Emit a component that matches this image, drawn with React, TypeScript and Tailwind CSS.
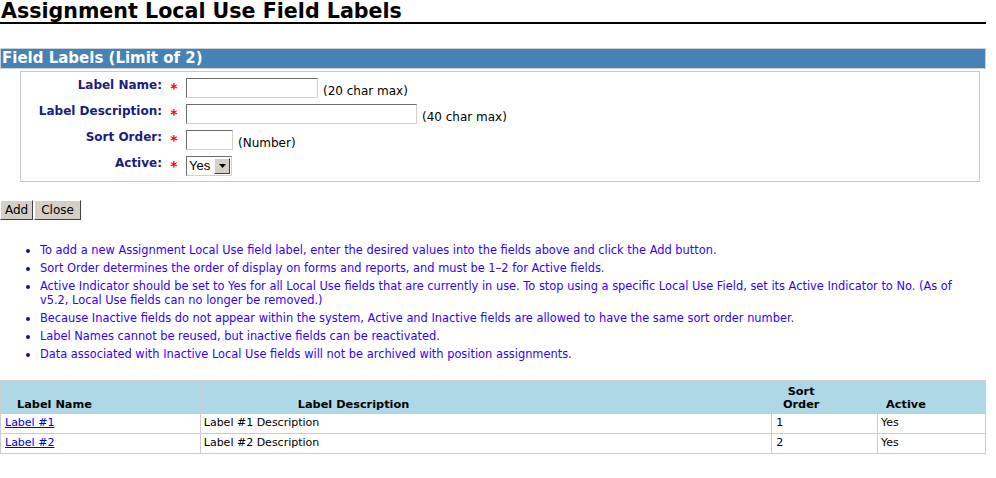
import React from 'react'

const notes: string[] = [
  'To add a new Assignment Local Use field label, enter the desired values into the fields above and click the Add button.',
  'Sort Order determines the order of display on forms and reports, and must be 1\u20132 for Active fields.',
  'Active Indicator should be set to Yes for all Local Use fields that are currently in use. To stop using a specific Local Use Field, set its Active Indicator to No. (As of v5.2, Local Use fields can no longer be removed.)',
  'Because Inactive fields do not appear within the system, Active and Inactive fields are allowed to have the same sort order number.',
  'Label Names cannot be reused, but inactive fields can be reactivated.',
  'Data associated with Inactive Local Use fields will not be archived with position assignments.',
]

const rows = [
  { name: 'Label #1', desc: 'Label #1 Description', sort: '1', active: 'Yes' },
  { name: 'Label #2', desc: 'Label #2 Description', sort: '2', active: 'Yes' },
]

const inputCls =
  'h-[20px] bg-white border border-t-[#6b6b6b] border-l-[#6b6b6b] border-r-[#d4d0c8] border-b-[#d4d0c8] outline-none'

const FieldRow: React.FC<{ label: string; hint?: string; children: React.ReactNode }> = ({ label, hint, children }) => (
  <div className="flex items-start h-[26px]">
    <div className="w-[141px] text-right font-bold text-[12px] text-[#1c1c80] pt-[1px]">{label}</div>
    <div className="w-[24px] text-center text-[#ff0000] text-[14px] font-bold pt-[6px] leading-[14px]">*</div>
    {children}
    {hint && <span className="text-[12px] text-black ml-[5px] pt-[9px] leading-[14px]">{hint}</span>}
  </div>
)

export default function App() {
  return (
    <div className="w-[996px] h-[478px] bg-white font-['DejaVu_Sans',Verdana,sans-serif] text-[11px] overflow-hidden">
      <div className="w-[986px]">
        <h1 className="text-[20.6px] font-bold text-black leading-[22px] pl-[1px] border-b-2 border-black">
          Assignment Local Use Field Labels
        </h1>

        <div className="mt-[24px] h-[21px] bg-[#4682b4] border border-[#c8d0d8] text-white font-bold text-[15px] leading-[19px] pl-[1px]">
          Field Labels (Limit of 2)
        </div>

        <div className="ml-[20px] mr-[6px] mt-[2px] h-[111px] border border-[#c8c8c8] pt-[3px]">
          <FieldRow label="Label Name:" hint="(20 char max)">
            <input className={`${inputCls} w-[132px] mt-[3px]`} />
          </FieldRow>
          <FieldRow label="Label Description:" hint="(40 char max)">
            <input className={`${inputCls} w-[231px] mt-[3px]`} />
          </FieldRow>
          <FieldRow label="Sort Order:" hint="(Number)">
            <input className={`${inputCls} w-[47px] mt-[3px]`} />
          </FieldRow>
          <FieldRow label="Active:">
            <div className="mt-[3px] h-[20px] w-[46px] flex items-center border border-t-[#6b6b6b] border-l-[#6b6b6b] border-r-[#d4d0c8] border-b-[#d4d0c8] bg-white">
              <span className="pl-[2px] flex-1 font-['Liberation_Sans',Arial,sans-serif] text-[13px]">Yes</span>
              <span className="w-[16px] h-[16px] mr-[1px] bg-[#d4d0c8] border border-t-white border-l-white border-r-[#404040] border-b-[#404040] flex items-center justify-center">
                <svg width="7" height="4" viewBox="0 0 7 4"><path d="M0 0h7L3.5 4z" fill="#000" /></svg>
              </span>
            </div>
          </FieldRow>
        </div>

        <div className="mt-[18px] flex gap-[1px]">
          <button className="h-[20px] px-[4px] bg-[#d4d0c8] border border-t-white border-l-white border-r-[#404040] border-b-[#404040] text-[12px] text-black leading-[16px]">
            Add
          </button>
          <button className="h-[20px] px-[6px] bg-[#d4d0c8] border border-t-white border-l-white border-r-[#404040] border-b-[#404040] text-[12px] text-black leading-[16px]">
            Close
          </button>
        </div>

        <ul className="mt-[23px] pl-[40px] list-disc text-[#3300ff] text-[11.4px] leading-[14px] pr-[14px] marker:text-[#1010a0]">
          {notes.map((n, i) => (
            <li key={i} className="mb-[4px]">
              {n}
            </li>
          ))}
        </ul>

        <table className="mt-[19px] w-[986px] border-collapse text-[11px] text-black">
          <thead>
            <tr className="bg-[#add8e6] h-[33px] text-[11.3px]">
              <th className="w-[200px] border border-[#cccccc] text-left align-bottom font-bold pl-[16px] pb-[2px] leading-[13px]">Label Name</th>
              <th className="w-[572px] border border-[#cccccc] text-left align-bottom font-bold pl-[97px] pb-[2px] leading-[13px]">Label Description</th>
              <th className="w-[106px] border border-[#cccccc] text-left align-bottom font-bold pl-[9px] pb-[2px] leading-[13px]">
                <div className="w-[40px] text-center">Sort<br />Order</div>
              </th>
              <th className="w-[108px] border border-[#cccccc] text-left align-bottom font-bold pl-[8px] pb-[2px] leading-[13px]">Active</th>
            </tr>
          </thead>
          <tbody>
            {rows.map((r) => (
              <tr key={r.name} className="h-[20px]">
                <td className="border border-[#cccccc] pl-[4px]">
                  <a href="#" className="text-[#0000ee] underline">{r.name}</a>
                </td>
                <td className="border border-[#cccccc] pl-[3px]">{r.desc}</td>
                <td className="border border-[#cccccc] pl-[4px]">{r.sort}</td>
                <td className="border border-[#cccccc] pl-[3px]">{r.active}</td>
              </tr>
            ))}
          </tbody>
        </table>
      </div>
    </div>
  )
}
